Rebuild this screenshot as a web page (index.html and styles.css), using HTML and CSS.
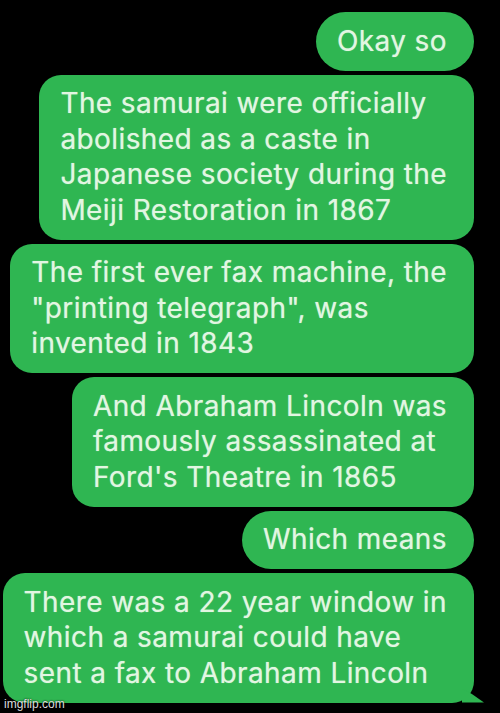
FILE: index.html
```html
<!DOCTYPE html>
<html>
<head>
    <meta charset="utf-8">
    <title>Samurai fax</title>
    <link rel="stylesheet" href="styles.css">
</head>
<body>
    <!-- conversation, all messages sent from this side -->
    <div class="thread">
        <div class="bubble pill">Okay so</div>
        <div class="bubble">The samurai were officially<br>abolished as a caste in<br>Japanese society during the<br>Meiji Restoration in 1867</div>
        <div class="bubble">The first ever fax machine, the<br>"printing telegraph", was<br>invented in 1843</div>
        <div class="bubble">And Abraham Lincoln was<br>famously assassinated at<br>Ford's Theatre in 1865</div>
        <div class="bubble pill">Which means</div>
        <div class="bubble last">There was a 22 year window in<br>which a samurai could have<br>sent a fax to Abraham Lincoln</div>
    </div>
    <div class="watermark">imgflip.com</div>
</body>
</html>
```

FILE: styles.css
```css
body {
    margin: 0;
    background-color: #000;
    font-family: Inter, "Liberation Sans", sans-serif;
    width: 500px;
    height: 713px;
    overflow: hidden;
    position: relative;
}

.thread {
    display: flex;
    flex-direction: column;
    align-items: flex-end;
    gap: 4px;
    padding: 12px 26px 0 0;
}

.bubble {
    background-color: #2fb652;
    color: #e2f6e2;
    font-size: 28px;
    letter-spacing: 0.4px;
    line-height: 35.5px;
    padding: 11.5px 27px 11.5px 21px;
    border-radius: 22px;
    white-space: nowrap;
    text-shadow: 0 0 1px rgba(226, 246, 226, 0.6);
    position: relative;
}

/* single-line messages are pills */
.bubble.pill {
    border-radius: 30px;
}

/* little tail on the last message */
.bubble.last::after {
    content: "";
    position: absolute;
    right: -10px;
    bottom: 0;
    width: 22px;
    height: 14px;
    background-color: #2fb652;
    clip-path: polygon(0 0, 45% 40%, 100% 100%, 0 100%);
}

.watermark {
    position: absolute;
    left: 4px;
    bottom: 2px;
    font-family: "Liberation Sans", sans-serif;
    font-size: 12px;
    color: #ddd;
    text-shadow: 0 0 2px #000;
}
```
